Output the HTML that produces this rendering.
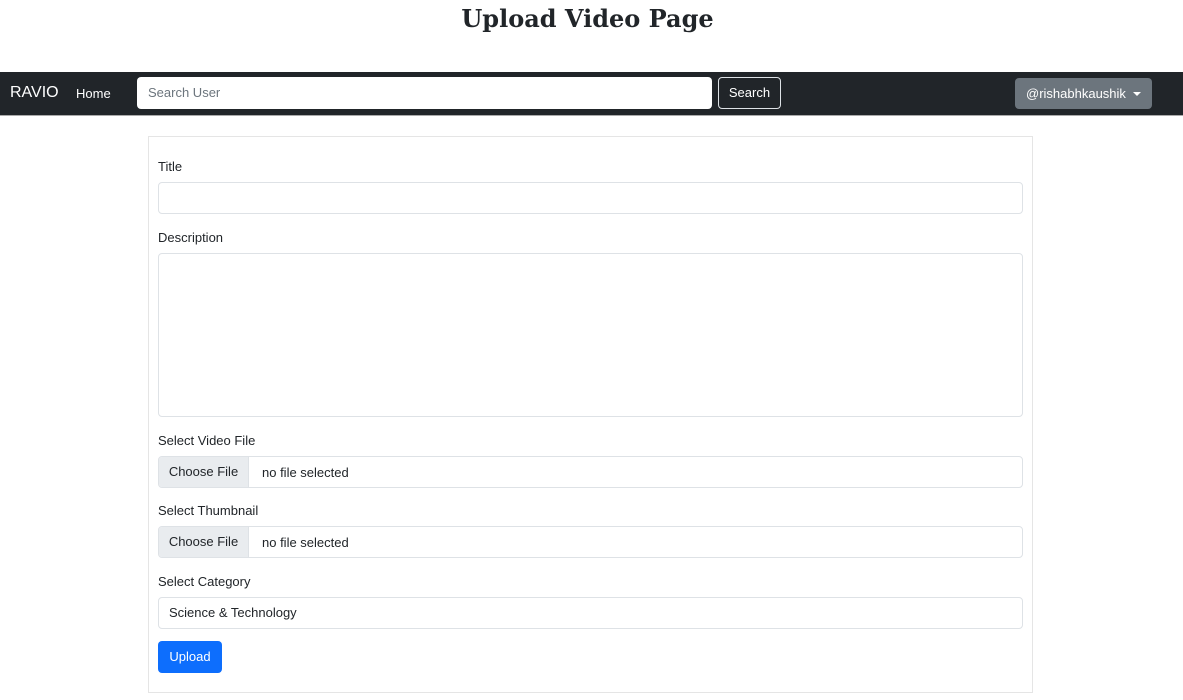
<!DOCTYPE html>
<html><head><style>
*{box-sizing:border-box;margin:0;padding:0}
body{width:1183px;height:700px;background:#fff;font-family:"Liberation Sans",sans-serif;color:#212529;font-size:13px;position:relative;overflow:hidden}
h1{position:absolute;top:2px;left:0;width:1175px;text-align:center;font-family:"DejaVu Serif","Liberation Serif",serif;font-weight:bold;font-size:24px;line-height:34px;color:#212529}
.nav{position:absolute;top:72px;left:0;width:1183px;height:44px;background:#212529;border-bottom:1px solid #aaa}
.abs{position:absolute}
.brand{left:10px;top:12px;color:#fff;font-size:16px}
.home{left:76px;top:14px;color:#fff;font-size:13px}
.search{left:137px;top:5px;width:575px;height:32px;background:#fff;border-radius:4px;padding:8px 11px;color:#6c757d}
.sbtn{left:718px;top:5px;width:63px;height:32px;border:1px solid #dee2e6;border-radius:4px;color:#fff;text-align:center;line-height:30px}
.user{left:1015px;top:6px;width:137px;height:31px;background:#6c757d;border-radius:4px;color:#fff;line-height:31px;padding-left:11px}
.caret{position:absolute;left:118px;top:14px;width:0;height:0;border-left:4px solid transparent;border-right:4px solid transparent;border-top:4px solid #fff}
.card{position:absolute;left:148px;top:136px;width:885px;height:557px;border:1px solid #e5e5e5}
.lbl{position:absolute;left:158px}
.inp{position:absolute;left:158px;width:865px;height:32px;border:1px solid #dee2e6;border-radius:4px;background:#fff}
.fc{display:flex;align-items:center;overflow:hidden}
.fc .b{width:90px;height:100%;background:#e9ecef;border-right:1px solid #dee2e6;line-height:30px;text-align:center}
.fc .t{padding-left:13px}
</style></head><body>
<h1>Upload Video Page</h1>
<div class="nav">
<div class="abs brand">RAVIO</div>
<div class="abs home">Home</div>
<div class="abs search">Search User</div>
<div class="abs sbtn">Search</div>
<div class="abs user">@rishabhkaushik<span class="caret"></span></div>
</div>
<div class="card"></div>
<div class="lbl" style="top:159px">Title</div>
<div class="inp" style="top:182px"></div>
<div class="lbl" style="top:230px">Description</div>
<div class="inp" style="top:253px;height:164px"></div>
<div class="lbl" style="top:433px">Select Video File</div>
<div class="inp fc" style="top:456px"><div class="b">Choose File</div><div class="t">no file selected</div></div>
<div class="lbl" style="top:503px">Select Thumbnail</div>
<div class="inp fc" style="top:526px"><div class="b">Choose File</div><div class="t">no file selected</div></div>
<div class="lbl" style="top:574px">Select Category</div>
<div class="inp" style="top:597px;padding:7px 10px">Science &amp; Technology</div>
<div class="abs" style="left:158px;top:641px;width:64px;height:32px;background:#0d6efd;border-radius:4px;color:#fff;text-align:center;line-height:32px">Upload</div>
</body></html>
